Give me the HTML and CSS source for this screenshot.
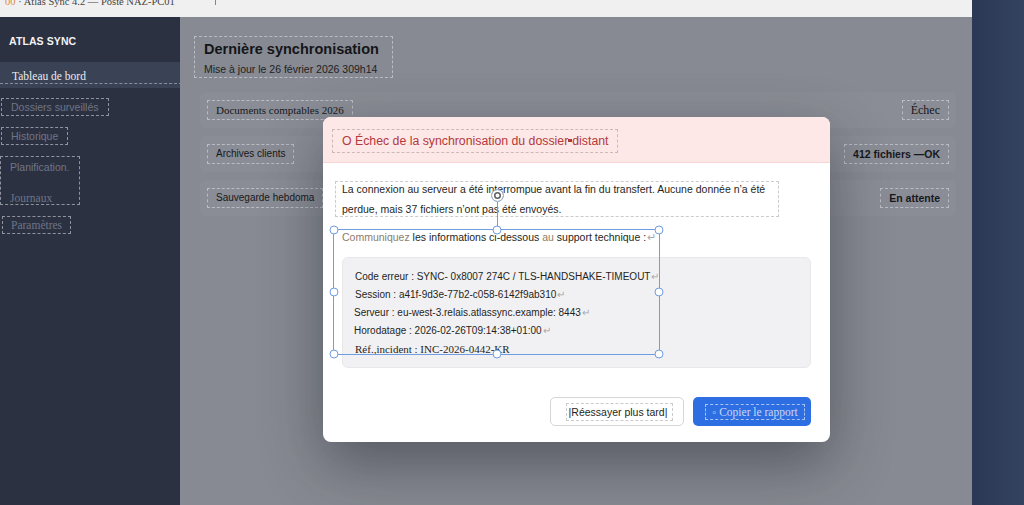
FILE: index.html
```html
<!DOCTYPE html>
<html lang="fr">
<head>
    <meta charset="UTF-8">
    <meta name="viewport" content="width=device-width, initial-scale=1.0">
    <title>Atlas Sync 4.2</title>
    <link rel="stylesheet" href="styles.css">
</head>
<body>
    <div class="window">
        <div class="titlebar">
            <span class="title-text"><span class="app-dot">00</span> · Atlas Sync 4.2 — Poste NAZ-PC01</span>
            <span class="caret"></span>
        </div>

        <div class="app">
            <aside class="sidebar">
                <div class="brand">ATLAS SYNC</div>
                <nav class="nav">
                    <a class="nav-active serif">Tableau de bord</a>
                    <a class="nav-item boxed">Dossiers surveillés</a>
                    <a class="nav-item boxed">Historique</a>
                    <div class="nav-group boxed">
                        <a>Planification<span class="dot">.</span></a>
                        <a class="serif">Journaux</a>
                    </div>
                    <a class="nav-item boxed serif">Paramètres</a>
                </nav>
            </aside>

            <main class="main">
                <header class="page-head boxed">
                    <h1>Dernière synchronisation</h1>
                    <p>Mise à jour le 26 février 2026 309h14</p>
                </header>

                <ul class="jobs">
                    <li class="job">
                        <span class="job-name boxed serif">Documents comptables 2026</span>
                        <span class="job-status boxed serif">Échec</span>
                    </li>
                    <li class="job">
                        <span class="job-name boxed">Archives clients</span>
                        <span class="job-status boxed strong">412 fichiers —OK</span>
                    </li>
                    <li class="job">
                        <span class="job-name boxed">Sauvegarde hebdoma</span>
                        <span class="job-status boxed strong">En attente</span>
                    </li>
                </ul>

                <div class="modal">
                    <div class="modal-head">
                        <h2 class="boxed">O Échec de la synchronisation du dossier<span class="mark"></span>distant</h2>
                    </div>

                    <div class="modal-body">
                        <p class="lead boxed">La connexion au serveur a été interrompue avant la fin du transfert. Aucune donnée n’a été perdue, mais 37 fichiers n’ont pas été envoyés.</p>
                        <p class="ask"><span class="soft">Communiquez</span> les informations ci-dessous <span class="soft">au</span> support technique :<span class="ret">↵</span></p>

                        <div class="report">
                            <div>Code erreur : SYNC- 0x8007 274C / TLS-HANDSHAKE-TIMEOUT<span class="ret">↵</span></div>
                            <div>Session : a41f-9d3e-77b2-c058-6142f9ab310<span class="ret">↵</span></div>
                            <div class="nudge">Serveur : eu-west-3.relais.atlassync.example: 8443<span class="ret">↵</span></div>
                            <div class="nudge">Horodatage : 2026-02-26T09:14:38+01:00<span class="ret">↵</span></div>
                            <div class="serif">Réf.,incident : INC-2026-0442-KR</div>
                        </div>

                        <div class="actions">
                            <button class="btn btn-light"><span class="boxed">|Réessayer plus tard|</span></button>
                            <button class="btn btn-primary"><span class="boxed serif">◦ Copier le rapport</span></button>
                        </div>
                    </div>

                    <!-- selection frame from the editor -->
                    <div class="selection">
                        <span class="rotate"></span>
                        <span class="handle tl"></span><span class="handle tm"></span><span class="handle tr"></span>
                        <span class="handle ml"></span><span class="handle mr"></span>
                        <span class="handle bl"></span><span class="handle bm"></span><span class="handle br"></span>
                    </div>
                </div>
            </main>
        </div>
    </div>

    <div class="desktop"></div>
</body>
</html>
```

FILE: styles.css
```css
body {
    margin: 0;
    display: flex;
    height: 505px;
    overflow: hidden;
    font-family: "Liberation Sans", Arial, sans-serif;
    font-size: 11px;
    background-color: #2b3754;
}

.serif {
    font-family: "Liberation Serif", "Times New Roman", serif;
}

.boxed {
    outline: 1px dashed rgba(225, 228, 235, 0.55);
}

/* app window */
.window {
    width: 972px;
    display: flex;
    flex-direction: column;
}

.titlebar {
    height: 17px;
    background-color: #f0f0f0;
    overflow: hidden;
    display: flex;
    font-family: "Liberation Serif", serif;
    font-size: 10.5px;
    color: #444;
}

.title-text {
    margin: -5px 0 0 5px;
    line-height: 14px;
    white-space: nowrap;
}

.app-dot {
    color: #e08a4c;
}

.caret {
    width: 1px;
    height: 5px;
    margin-left: 40px;
    background-color: #6d86c8;
}

.app {
    flex: 1;
    display: flex;
}

/* sidebar */
.sidebar {
    width: 180px;
    background-color: #2c3141;
    padding-top: 16px;
}

.brand {
    padding-left: 9px;
    line-height: 16px;
    font-size: 10.5px;
    font-weight: bold;
    letter-spacing: 0.1px;
    color: #f2f3f6;
}

.nav {
    display: flex;
    flex-direction: column;
    align-items: flex-start;
    margin-top: 13px;
    font-size: 10.5px;
}

.nav a {
    color: #6e7587;
    line-height: 14px;
}

.nav .serif {
    font-size: 11.5px;
}

.nav-active {
    position: relative;
    align-self: stretch;
    height: 26px;
    padding: 7px 0 0 12px;
    box-sizing: border-box;
    background-color: #3a4356;
    color: #e9ebf0 !important;
    margin-bottom: 11px;
}

.nav-active::after {
    content: "";
    position: absolute;
    left: 0;
    top: 21px;
    width: 187px;
    border-top: 1px dashed rgba(200, 205, 215, 0.55);
}

.nav-item {
    margin: 0 0 13px 2px;
    padding: 1px 9px;
}

.nav-item.serif {
    margin-left: 3px;
    padding: 1px 8px;
}

.nav-group {
    display: flex;
    flex-direction: column;
    gap: 16px;
    margin: 0 0 13px 1px;
    padding: 3px 9px 0;
    height: 47px;
    box-sizing: border-box;
    width: 78px;
}

.dot {
    font-size: 9px;
}

/* main */
.main {
    position: relative;
    flex: 1;
    background-color: #878a92;
    padding: 20px 16px 0 20px;
}

.page-head {
    width: fit-content;
    margin-left: -5px;
    padding: 3px 13px 1px 9px;
}

.page-head h1 {
    margin: 0;
    font-size: 14.5px;
    line-height: 18px;
    color: #141519;
}

.page-head p {
    margin: 4px 0 0;
    font-size: 10.5px;
    line-height: 14px;
    color: #1d1e22;
}

.jobs {
    list-style: none;
    margin: 15px 0 0;
    padding: 0;
    display: flex;
    flex-direction: column;
    gap: 8px;
}

.job {
    height: 36px;
    display: flex;
    align-items: center;
    justify-content: space-between;
    padding: 0 8px;
    border-radius: 6px;
    background-color: rgba(255, 255, 255, 0.03);
}

.job-name,
.job-status {
    padding: 0 8px;
    line-height: 18px;
    font-size: 10px;
    color: #17181c;
}

.job-name.serif {
    font-size: 11px;
}

.job-status.serif {
    font-size: 12px;
}

.strong {
    font-weight: bold;
    font-size: 10.5px;
}

/* dialog */
.modal {
    position: absolute;
    left: 143px;
    top: 100px;
    width: 507px;
    background-color: #ffffff;
    border-radius: 8px;
    box-shadow: 0 22px 60px rgba(25, 28, 38, 0.45);
    color: #1f1f22;
}

.modal-head {
    height: 46px;
    box-sizing: border-box;
    padding: 13px 0 0 10px;
    background-color: #fde8e7;
    border-bottom: 1px solid #f6d6d4;
    border-radius: 8px 8px 0 0;
}

.modal-head h2 {
    display: inline-block;
    margin: 0;
    padding: 0 9px;
    font-size: 12.3px;
    font-weight: normal;
    line-height: 22px;
    color: #b3393b;
    outline-color: rgba(150, 140, 140, 0.5);
}

.mark {
    display: inline-block;
    width: 4px;
    height: 3px;
    margin-bottom: 3px;
    background-color: #b3393b;
}

.modal-body {
    padding: 16px 19px 16px;
}

.modal-body .boxed {
    outline-color: rgba(150, 150, 160, 0.5);
}

.lead {
    margin: 0 0 8px -9px;
    width: 430px;
    padding: 0 9px;
    font-size: 10.5px;
    line-height: 20px;
    outline-offset: -3px;
}

.ask {
    margin: 0;
    font-size: 10.5px;
    line-height: 20px;
}

.soft {
    color: #8e7c69;
}

.ret {
    color: #a8a8ad;
    margin-left: 1px;
}

.report {
    margin-top: 10px;
    padding: 10px 12px 11px;
    background-color: #f1f1f3;
    border: 1px solid #e8e8ec;
    border-radius: 6px;
    font-size: 10px;
    line-height: 18px;
    box-sizing: border-box;
    height: 111px;
}

.report .nudge {
    margin-left: -1px;
}

.report .serif {
    font-size: 11px;
}

.actions {
    display: flex;
    justify-content: flex-end;
    gap: 9px;
    margin-top: 29px;
}

.btn {
    height: 29px;
    padding: 0;
    border-radius: 5px;
    font-family: "Liberation Sans", Arial, sans-serif;
    font-size: 10.5px;
    white-space: nowrap;
    cursor: pointer;
}

.btn-light {
    width: 134px;
    background-color: #ffffff;
    border: 1px solid #d6d6da;
    color: #1f1f22;
}

.btn-light .boxed {
    padding: 2px 5px 2px 2px;
    margin-left: 5px;
}

.btn-primary {
    width: 118px;
    background-color: #2d6fe2;
    border: none;
    color: #c9d7f4;
}

.btn-primary .boxed {
    display: inline-block;
    margin-left: 6px;
    padding: 1px 6px;
    font-size: 11.5px;
    outline-color: rgba(220, 230, 250, 0.7) !important;
}

/* editor selection */
.selection {
    position: absolute;
    left: 10px;
    top: 112px;
    width: 327px;
    height: 126px;
    border: 1px solid #6f9de0;
    box-sizing: border-box;
}

.handle {
    position: absolute;
    width: 7px;
    height: 7px;
    border: 1px solid #6f9de0;
    border-radius: 50%;
    background-color: #ffffff;
    transform: translate(-50%, -50%);
}

.tl { left: 0; top: 0; }
.tm { left: 50%; top: 0; }
.tr { left: 100%; top: 0; }
.ml { left: 0; top: 50%; }
.mr { left: 100%; top: 50%; }
.bl { left: 0; top: 100%; }
.bm { left: 50%; top: 100%; }
.br { left: 100%; top: 100%; }

.rotate {
    position: absolute;
    left: 50%;
    top: -28px;
    width: 1px;
    height: 28px;
    background-color: #6f9de0;
}

.rotate::before {
    content: "";
    position: absolute;
    left: -6px;
    top: -13px;
    width: 11px;
    height: 11px;
    border: 1px solid #8fa6c8;
    border-radius: 50%;
    background-color: #ffffff;
    box-shadow: inset 0 0 0 2px #fff, inset 0 0 0 3.5px #5d5d63;
}

/* desktop behind the window */
.desktop {
    flex: 1;
    background: linear-gradient(90deg, #2a3856 0%, #34435f 100%);
}
```
